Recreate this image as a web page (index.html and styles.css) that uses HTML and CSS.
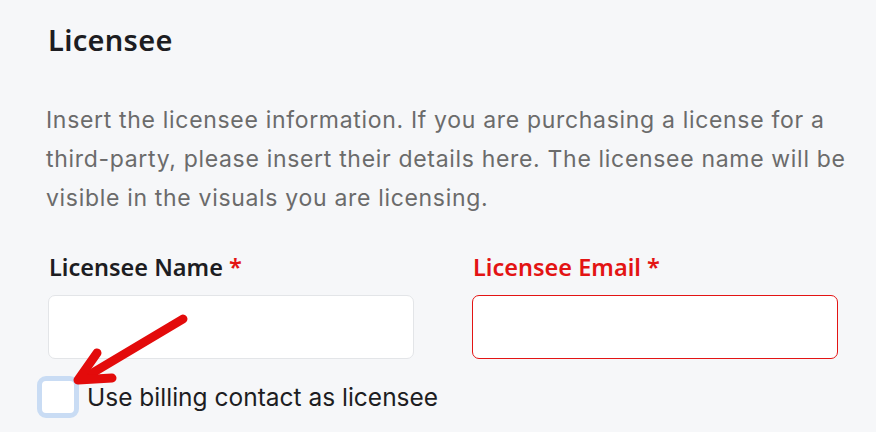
FILE: index.html
```html
<html lang="en">
<head>
    <meta charset="UTF-8">
    <meta name="viewport" content="width=device-width, initial-scale=1.0">
    <title>Licensee</title>
    <link rel="stylesheet" href="styles.css">
</head>
<body>
    <div class="section">
        <h2 class="title">Licensee</h2>
        <p class="intro">Insert the licensee information. If you are purchasing a license for a third-party, please insert their details here. The licensee name will be visible in the visuals you are licensing.</p>
        <div class="fields">
            <div class="field">
                <label for="lname">Licensee Name <span class="req">*</span></label>
                <input type="text" id="lname" class="input">
            </div>
            <div class="field invalid">
                <label for="lemail">Licensee Email <span class="req">*</span></label>
                <input type="email" id="lemail" class="input">
            </div>
        </div>
        <label class="check">
            <span class="box"></span>
            <span>Use billing contact as licensee</span>
        </label>
        <svg class="arrow" width="160" height="100" viewBox="0 0 160 100">
            <path d="M143 16 L44 75" stroke="#e30b0b" stroke-width="9" stroke-linecap="round" fill="none"/>
            <path d="M57 50 L38 77 L72 75" stroke="#e30b0b" stroke-width="9" stroke-linecap="round" stroke-linejoin="round" fill="none"/>
        </svg>
    </div>
</body>
</html>
```

FILE: styles.css
```css
body {
    margin: 0;
    padding: 0;
    background-color: #f6f7f9;
    font-family: Inter, "Noto Sans", sans-serif;
    overflow: hidden;
}

.section {
    position: relative;
    padding: 20px 20px 0 48px;
}

.title {
    margin: 0;
    font-family: "Noto Sans", sans-serif;
    font-size: 29px;
    font-weight: 600;
    color: #1d1d22;
    letter-spacing: 0.3px;
}

.intro {
    max-width: 812px;
    margin: 42px 0 0 -2px;
    font-size: 23px;
    line-height: 39px;
    letter-spacing: 0.68px;
    color: #6b6b6b;
}

.fields {
    display: grid;
    grid-template-columns: 366px 366px;
    column-gap: 58px;
    margin-top: 33px;
}

.field label {
    display: block;
    margin: 0 0 12px 1px;
    font-family: "Noto Sans", sans-serif;
    font-size: 23.5px;
    font-weight: 600;
    color: #1d1d22;
}

.req {
    color: #e31414;
}

.field.invalid label {
    color: #e31414;
}

.input {
    display: block;
    box-sizing: border-box;
    width: 100%;
    height: 64px;
    border: 1px solid #e3e5e8;
    border-radius: 7px;
    background: #fff;
}

.field.invalid .input {
    border-color: #e31414;
}

.check {
    display: flex;
    align-items: center;
    gap: 8px;
    margin: 17px 0 0 -11px;
    font-size: 24.5px;
    color: #1d1d22;
}

.box {
    flex: none;
    box-sizing: border-box;
    width: 42px;
    height: 42px;
    border: 5px solid #c9dcf4;
    border-radius: 9px;
    background: #fff;
}

.arrow {
    position: absolute;
    left: 40px;
    top: 303px;
}
```
